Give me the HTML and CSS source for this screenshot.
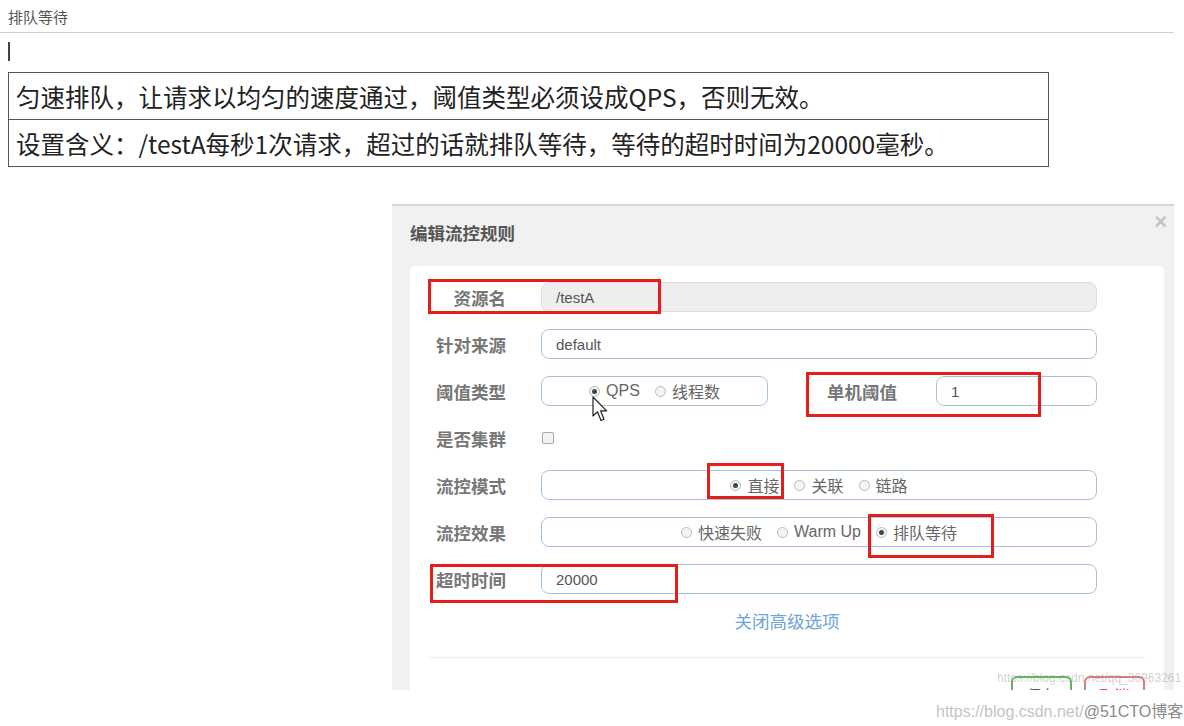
FILE: index.html
```html
<!DOCTYPE html>
<html lang="zh-CN">
<head>
    <meta charset="UTF-8">
    <meta name="viewport" content="width=device-width, initial-scale=1.0">
    <title>排队等待</title>
    <link rel="stylesheet" href="styles.css">
</head>
<body>

    <div class="tab-title">排队等待</div>
    <div class="editor"><span class="caret"></span></div>

    <table class="note">
        <tr><td>匀速排队，让请求以均匀的速度通过，阈值类型必须设成QPS，否则无效。</td></tr>
        <tr><td>设置含义：/testA每秒1次请求，超过的话就排队等待，等待的超时时间为20000毫秒。</td></tr>
    </table>

    <!-- 编辑流控规则 dialog -->
    <div class="dialog">
        <div class="dialog-head">
            <span class="dialog-title">编辑流控规则</span>
            <span class="close">&times;</span>
        </div>
        <div class="dialog-body">
            <div class="form-row">
                <label class="label">资源名</label>
                <div class="input readonly">/testA</div>
            </div>
            <div class="form-row">
                <label class="label">针对来源</label>
                <div class="input">default</div>
            </div>
            <div class="form-row">
                <label class="label">阈值类型</label>
                <div class="split">
                    <div class="input radios">
                        <span class="radio checked"></span>QPS
                        <span class="radio"></span>线程数
                    </div>
                    <label class="label sub-label">单机阈值</label>
                    <div class="input">1</div>
                </div>
            </div>
            <div class="form-row">
                <label class="label">是否集群</label>
                <div><span class="checkbox"></span></div>
            </div>
            <div class="form-row">
                <label class="label">流控模式</label>
                <div class="input radios">
                    <span class="radio checked"></span>直接
                    <span class="radio"></span>关联
                    <span class="radio"></span>链路
                </div>
            </div>
            <div class="form-row">
                <label class="label">流控效果</label>
                <div class="input radios">
                    <span class="radio"></span>快速失败
                    <span class="radio"></span>Warm Up
                    <span class="radio checked"></span>排队等待
                </div>
            </div>
            <div class="form-row">
                <label class="label">超时时间</label>
                <div class="input">20000</div>
            </div>

            <div class="toggle">关闭高级选项</div>

            <div class="footer">
                <span class="btn btn-save">保存</span>
                <span class="btn btn-cancel">取消</span>
            </div>
        </div>
    </div>

    <!-- annotations drawn over the screenshot -->
    <div class="mark mark-name"></div>
    <div class="mark mark-count"></div>
    <div class="mark mark-mode"></div>
    <div class="mark mark-effect"></div>
    <div class="mark mark-timeout"></div>

    <svg class="pointer" width="17" height="27" viewBox="0 0 17 27">
        <path d="M1 1 L1 20 L5.5 15.8 L9 24.5 L12 23.2 L8.6 14.8 L14.6 14.8 Z" fill="#fff" stroke="#222" stroke-width="1.2" stroke-linejoin="round"/>
    </svg>

    <div class="wm wm-small">https://blog.csdn.net/qq_36963261</div>
    <div class="wm wm-big">https://blog.csdn.net/<span class="wm-dark">@51CTO博客</span></div>

</body>
</html>
```

FILE: styles.css
```css
body {
    font-family: "Liberation Sans", "Noto Sans CJK SC", sans-serif;
    background-color: #fff;
    margin: 0;
    position: relative;
    height: 726px;
    overflow: hidden;
}
.tab-title {
    width: 1166px;
    height: 32px;
    line-height: 34px;
    padding-left: 8px;
    font-family: "Noto Sans CJK SC", sans-serif;
    font-size: 15px;
    color: #555;
    border-bottom: 1px solid #cfcfcf;
}
.editor {
    height: 30px;
    padding: 9px 8px 0;
}
.caret {
    display: block;
    width: 2px;
    height: 19px;
    background-color: #444;
}
.note {
    border-collapse: collapse;
    margin-left: 8px;
    width: 1041px;
    font-family: "Noto Sans CJK SC", sans-serif;
    font-size: 24.5px;
    color: #222;
}
.note td {
    border: 1px solid #555;
    height: 46px;
    padding: 0 7px;
}

/* dialog */
.dialog {
    margin: 37px 0 0 392px;
    width: 782px;
    height: 484px;
    background-color: #f1f1f1;
    border-top: 2px solid #d6d6d6;
    overflow: hidden;
}
.dialog-head {
    height: 60px;
    padding: 0 7px 0 18px;
    display: flex;
    justify-content: space-between;
    align-items: flex-start;
}
.dialog-title {
    line-height: 54px;
    font-family: "Noto Sans CJK SC", sans-serif;
    font-size: 17.5px;
    font-weight: bold;
    color: #555;
}
.close {
    line-height: 32px;
    font-size: 22px;
    font-weight: bold;
    color: #c4c4c4;
}
.dialog-body {
    margin-left: 18px;
    width: 754px;
    height: 500px;
    background-color: #fff;
    border-radius: 5px 5px 0 0;
    padding-top: 16px;
    box-sizing: border-box;
}
.form-row {
    display: grid;
    grid-template-columns: 96px 556px;
    column-gap: 35px;
    align-items: center;
    height: 30px;
    margin-bottom: 17px;
}
.label {
    text-align: right;
    font-family: "Noto Sans CJK SC", sans-serif;
    font-size: 17.5px;
    font-weight: bold;
    color: #777;
    white-space: nowrap;
}
.input {
    height: 30px;
    box-sizing: border-box;
    border: 1px solid #a9c2dc;
    border-radius: 8px;
    padding: 0 14px;
    display: flex;
    align-items: center;
    font-size: 15px;
    color: #555;
}
.input.readonly {
    background-color: #eee;
    border-color: #ddd;
}
.split {
    display: grid;
    grid-template-columns: 227px 168px 161px;
    align-items: center;
}
.sub-label {
    text-align: left;
    padding-left: 59px;
}
.radios {
    justify-content: center;
    font-family: "Liberation Sans", "Noto Sans CJK SC", sans-serif;
    font-size: 16px;
    color: #666;
}
.radio {
    display: inline-block;
    width: 9px;
    height: 9px;
    border: 1px solid #bbb;
    border-radius: 50%;
    background-color: #f4f4f4;
    margin: 0 6px 0 15px;
    position: relative;
}
.radio:first-child {
    margin-left: 0;
}
.radio.checked::after {
    content: "";
    position: absolute;
    left: 2px;
    top: 2px;
    width: 5px;
    height: 5px;
    border-radius: 50%;
    background-color: #444;
}
.checkbox {
    display: block;
    width: 10px;
    height: 10px;
    margin-left: 1px;
    border: 1px solid #aaa;
    border-radius: 2px;
    background-color: #f2f2f2;
}
.toggle {
    text-align: center;
    margin-top: 14px;
    line-height: 20px;
    font-family: "Noto Sans CJK SC", sans-serif;
    font-size: 17.5px;
    color: #6ea4d8;
}
.footer {
    margin: 26px 19px 0 18px;
    border-top: 1px solid #eee;
    padding-top: 18px;
    display: flex;
    justify-content: flex-end;
    gap: 12px;
}
.btn {
    width: 57px;
    height: 34px;
    border: 2px solid #5cb85c;
    border-radius: 6px;
    text-align: center;
    line-height: 34px;
    font-family: "Noto Sans CJK SC", sans-serif;
    font-size: 15px;
    color: #555;
}
.btn-cancel {
    border-color: #e07a7a;
    color: #d9534f;
}

/* red annotation boxes */
.mark {
    position: absolute;
    border: 3px solid #e41f1b;
    box-sizing: border-box;
}
.mark-name { left: 428px; top: 279px; width: 233px; height: 35px; }
.mark-count { left: 806px; top: 372px; width: 235px; height: 45px; }
.mark-mode { left: 707px; top: 463px; width: 77px; height: 36px; }
.mark-effect { left: 868px; top: 514px; width: 126px; height: 44px; }
.mark-timeout { left: 430px; top: 564px; width: 248px; height: 39px; }

.pointer {
    position: absolute;
    left: 592px;
    top: 396px;
}

/* watermarks */
.wm {
    position: absolute;
    white-space: nowrap;
}
.wm-small {
    left: 997px;
    top: 671px;
    font-size: 12px;
    color: rgba(150, 150, 150, 0.45);
}
.wm-big {
    left: 936px;
    top: 698px;
    font-size: 16px;
    color: #c4c4c4;
}
.wm-dark {
    color: #8a8a8a;
}
```
